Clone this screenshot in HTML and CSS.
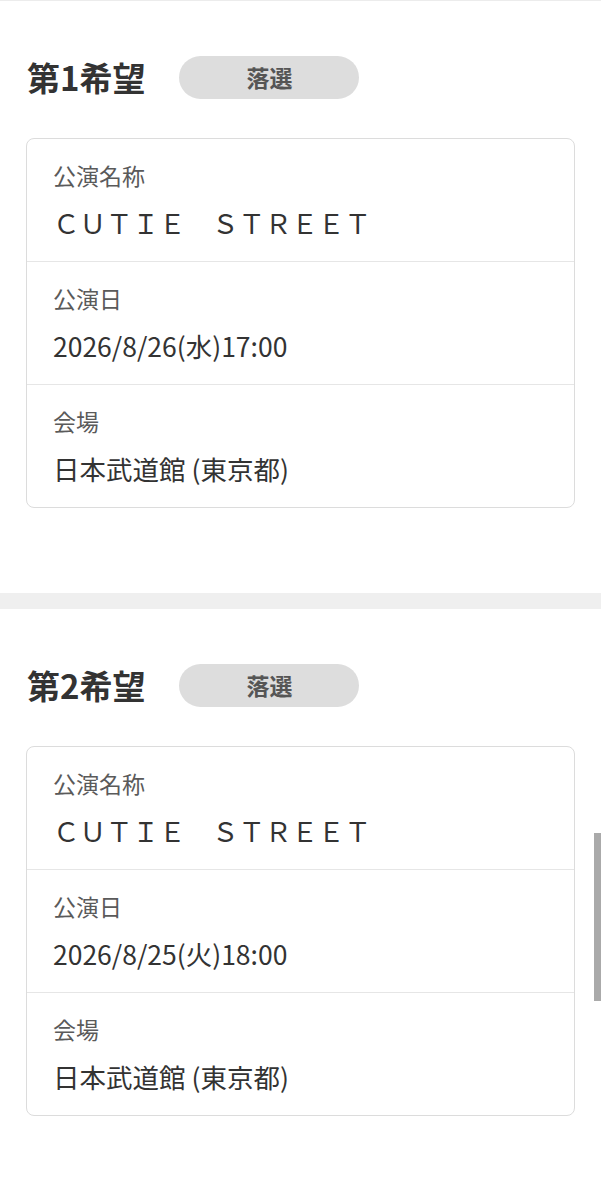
FILE: index.html
```html
<!DOCTYPE html>
<html lang="ja">
<head>
    <meta charset="UTF-8">
    <meta name="viewport" content="width=device-width, initial-scale=1.0">
    <title>抽選結果</title>
    <link rel="stylesheet" href="styles.css">
</head>
<body>
    <div class="page">
        <section class="wish">
            <div class="wish-head">
                <h2>第1希望</h2>
                <span class="badge">落選</span>
            </div>
            <dl class="card">
                <div class="row">
                    <dt>公演名称</dt>
                    <dd class="title">ＣＵＴＩＥ　ＳＴＲＥＥＴ</dd>
                </div>
                <div class="row">
                    <dt>公演日</dt>
                    <dd>2026/8/26(水)17:00</dd>
                </div>
                <div class="row">
                    <dt>会場</dt>
                    <dd>日本武道館 (東京都)</dd>
                </div>
            </dl>
        </section>

        <section class="wish">
            <div class="wish-head">
                <h2>第2希望</h2>
                <span class="badge">落選</span>
            </div>
            <dl class="card">
                <div class="row">
                    <dt>公演名称</dt>
                    <dd class="title">ＣＵＴＩＥ　ＳＴＲＥＥＴ</dd>
                </div>
                <div class="row">
                    <dt>公演日</dt>
                    <dd>2026/8/25(火)18:00</dd>
                </div>
                <div class="row">
                    <dt>会場</dt>
                    <dd>日本武道館 (東京都)</dd>
                </div>
            </dl>
        </section>
    </div>
    <div class="scroll-thumb"></div>
</body>
</html>
```

FILE: styles.css
```css
body {
    margin: 0;
    font-family: "Noto Sans CJK JP", "Noto Sans", sans-serif;
    color: #333;
    background-color: white;
}

.page {
    border-top: 1px solid #ececec;
}

.wish {
    padding: 55px 26px 85px;
}

.wish + .wish {
    border-top: 16px solid #efefef;
}

.wish-head {
    display: flex;
    align-items: center;
    gap: 34px;
    margin-bottom: 39px;
}

.wish-head h2 {
    margin: 0;
    font-size: 33px;
    font-weight: bold;
    line-height: 43px;
    padding-left: 1px;
}

.badge {
    width: 180px;
    height: 43px;
    line-height: 43px;
    text-align: center;
    border-radius: 22px;
    background-color: #dddddd;
    color: #555;
    font-size: 23px;
    font-weight: bold;
}

.card {
    margin: 0;
    border: 1px solid #dcdcdc;
    border-radius: 8px;
}

.row {
    height: 101px;
    padding: 21px 26px 0;
}

.row + .row {
    border-top: 1px solid #e6e6e6;
}

.row dt {
    font-size: 23px;
    line-height: 30px;
    color: #5a5a5a;
}

.row dd {
    margin: 16px 0 0;
    font-size: 26.5px;
    line-height: 34px;
    color: #333;
}

.scroll-thumb {
    position: absolute;
    top: 833px;
    right: 0;
    width: 7px;
    height: 168px;
    background-color: #aaa;
}
```
